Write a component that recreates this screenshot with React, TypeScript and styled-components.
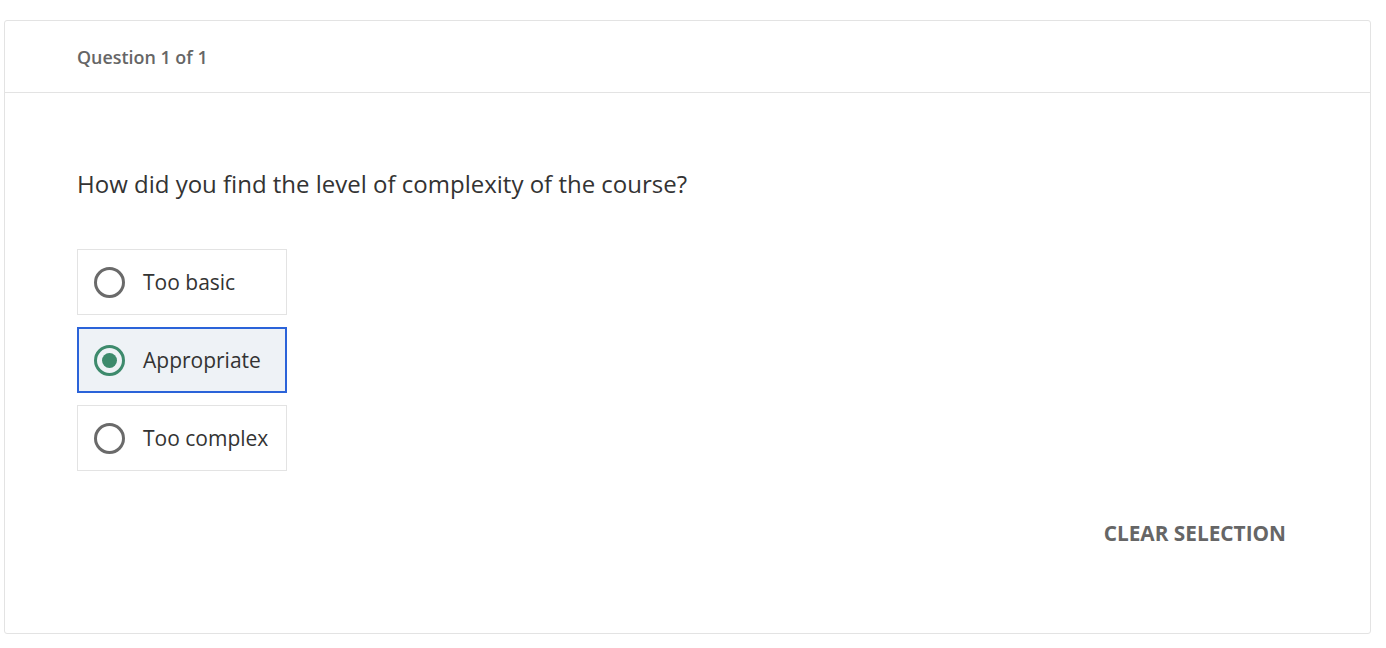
import React, { useState } from "react";
import styled, { createGlobalStyle } from "styled-components";

const Global = createGlobalStyle`
  html, body { margin: 0; padding: 0; background: #ffffff; }
  body { font-family: "Open Sans", "Liberation Sans", sans-serif; }
  * { box-sizing: border-box; }
`;

const Page = styled.div`
  padding: 20px 15px 14px 4px;
`;

const Card = styled.section`
  border: 1px solid #e3e3e3;
  border-radius: 3px;
  background: #fff;
  height: 614px;
  display: flex;
  flex-direction: column;
`;

const Header = styled.header`
  height: 72px;
  border-bottom: 1px solid #e3e3e3;
  display: flex;
  align-items: center;
  padding-left: 72px;
  font-size: 17.9px;
  font-weight: 600;
  color: #666666;
`;

const Body = styled.div`
  flex: 1;
  display: flex;
  flex-direction: column;
  padding: 72px 84px 0 72px;
`;

const QuestionText = styled.h2`
  margin: 0;
  font-size: 24px;
  font-weight: 400;
  color: #333333;
  line-height: 38px;
`;

const Options = styled.div`
  margin-top: 46px;
  display: flex;
  flex-direction: column;
  gap: 12px;
`;

const Option = styled.button<{ $selected: boolean }>`
  width: 210px;
  height: 66px;
  display: flex;
  align-items: center;
  gap: 18px;
  background: ${(p) => (p.$selected ? "#eef2f6" : "#ffffff")};
  border: ${(p) => (p.$selected ? "2px solid #2b63d9" : "1px solid #e3e3e3")};
  padding: 0 0 0 ${(p) => (p.$selected ? "15px" : "16px")};
  font-family: inherit;
  font-size: 21px;
  color: #333333;
  cursor: pointer;
  text-align: left;
`;

const Radio = styled.span<{ $selected: boolean }>`
  width: 31px;
  height: 31px;
  border-radius: 50%;
  border: 3px solid ${(p) => (p.$selected ? "#3d8a6c" : "#6a6a6a")};
  display: flex;
  align-items: center;
  justify-content: center;
  flex-shrink: 0;
  &::after {
    content: "";
    width: 15px;
    height: 15px;
    border-radius: 50%;
    background: #3d8a6c;
    display: ${(p) => (p.$selected ? "block" : "none")};
  }
`;

const Footer = styled.div`
  display: flex;
  justify-content: flex-end;
  margin-top: 48px;
`;

const ClearButton = styled.button`
  background: none;
  border: none;
  padding: 0;
  font-family: inherit;
  font-size: 20.8px;
  font-weight: 700;
  color: #666666;
  cursor: pointer;
`;

const choices = ["Too basic", "Appropriate", "Too complex"];

export default function App() {
  const [selected, setSelected] = useState<string | null>("Appropriate");
  return (
    <Page>
      <Global />
      <Card>
        <Header>Question 1 of 1</Header>
        <Body>
          <QuestionText>How did you find the level of complexity of the course?</QuestionText>
          <Options>
            {choices.map((c) => (
              <Option key={c} $selected={selected === c} onClick={() => setSelected(c)}>
                <Radio $selected={selected === c} />
                {c}
              </Option>
            ))}
          </Options>
          <Footer>
            <ClearButton onClick={() => setSelected(null)}>CLEAR SELECTION</ClearButton>
          </Footer>
        </Body>
      </Card>
    </Page>
  );
}
